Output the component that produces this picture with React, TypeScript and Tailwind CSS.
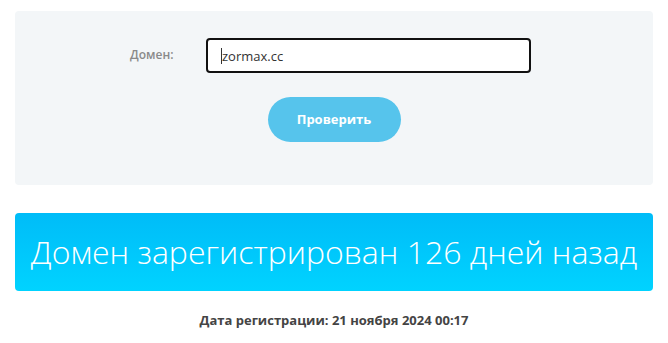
import { useState } from "react";

export default function App() {
  const [domain, setDomain] = useState("zormax.cc");

  return (
    <div
      className="min-h-screen bg-white px-[15px] pt-[11px]"
      style={{ fontFamily: '"Open Sans", "Noto Sans", sans-serif' }}
    >
      {/* Form */}
      <div className="rounded-[4px] bg-[#f3f6f8] pt-[27px] pb-[43px]">
        <div className="flex items-center justify-center pr-[7px]">
          <label className="w-[76px] text-[12px] font-semibold text-[#8a8a8a] -translate-y-[1px]">
            Домен:
          </label>
          <div className="relative">
            <input
              value={domain}
              onChange={(e) => setDomain(e.target.value)}
              className="h-[35px] w-[325px] rounded-[4px] border-2 border-[#111] bg-white pl-[14px] text-[13px] text-[#333] outline-none"
            />
            <span className="pointer-events-none absolute left-[15px] top-[10px] h-[16px] w-px bg-[#333]" />
          </div>
        </div>
        <div className="mt-[24px] flex justify-center">
          <button className="h-[45px] w-[133px] rounded-full bg-[#56c4ec] text-[13px] font-bold text-white">
            Проверить
          </button>
        </div>
      </div>

      {/* Result */}
      <div className="mt-[28px] flex h-[78px] items-center justify-center rounded-[4px] bg-gradient-to-b from-[#00bcf8] to-[#00d3ff]">
        <h2 className="text-[32px] font-light text-white">
          Домен зарегистрирован 126 дней назад
        </h2>
      </div>
      <p className="mt-[20px] text-center text-[13px] font-bold text-[#444]">
        Дата регистрации: 21 ноября 2024 00:17
      </p>
    </div>
  );
}
